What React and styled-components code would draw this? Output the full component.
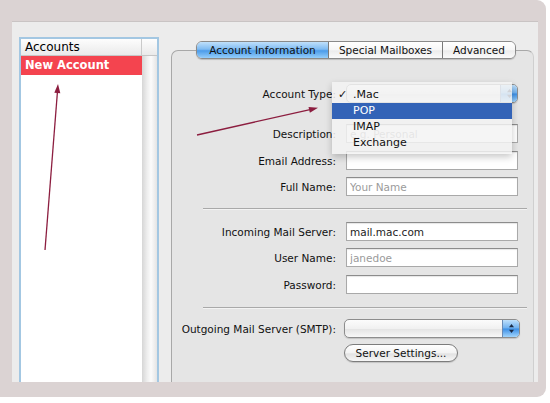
import styled, { createGlobalStyle } from "styled-components";

const GlobalStyle = createGlobalStyle`
  html, body { margin: 0; padding: 0; background: #ffffff; }
  body {
    font-family: "DejaVu Sans", "Liberation Sans", sans-serif;
    font-size: 10.5px;
    color: #141414;
  }
`;

const Frame = styled.div`
  position: relative;
  width: 546px;
  height: 397px;
  box-sizing: border-box;
  padding: 21px 8px 15px 12px;
  background: #dbd3d3;
  border-radius: 0 9px 9px 0;
  display: flex;
`;

const Window = styled.div`
  flex: 1;
  display: flex;
  gap: 12px;
  background: #ececec;
  border-top: 1px solid #c9c4c4;
  padding: 0 4px 0 7px;
`;

const Sidebar = styled.div`
  width: 140px;
  margin-top: 15px;
  box-sizing: border-box;
  border: 2px solid #a3c7e2;
  border-bottom: none;
  box-shadow: inset 0 0 0 1px #cfe0ee;
  display: flex;
  flex-direction: column;
  background: #fff;
`;

const ListHeader = styled.div`
  height: 16px;
  display: flex;
  background: linear-gradient(#fdfdfd, #eaeaea);
  border-bottom: 1px solid #c6c6c6;
`;

const HeaderCell = styled.div`
  flex: 1;
  padding-left: 4px;
  font-size: 12px;
  line-height: 16px;
  color: #000;
  border-right: 1px solid #cacaca;
`;

const HeaderCorner = styled.div`
  width: 15px;
`;

const ListBody = styled.div`
  flex: 1;
  display: flex;
`;

const ListColumn = styled.div`
  flex: 1;
  background: #fff;
`;

const ScrollTrack = styled.div`
  width: 15px;
  background: linear-gradient(90deg, #d6d6d6, #eeeeee 35%, #fbfbfb 60%, #e4e4e4);
`;

const ListRow = styled.div`
  height: 19px;
  line-height: 19px;
  padding-left: 4px;
  font-size: 11.5px;
  font-weight: bold;
  color: #fff;
  background: ${(p) => (p.$selected ? "#f4444f" : "transparent")};
`;

const RightColumn = styled.div`
  flex: 1;
  padding-top: 19px;
  display: flex;
  flex-direction: column;
`;

const TabBar = styled.div`
  align-self: flex-start;
  margin-left: 25px;
  margin-bottom: -9px;
  position: relative;
  z-index: 1;
  display: flex;
  height: 18px;
  box-sizing: border-box;
  border: 1px solid #8a8a8a;
  border-radius: 6px;
  overflow: hidden;
  box-shadow: 0 1px 1px rgba(0, 0, 0, 0.18);
`;

const Tab = styled.div`
  width: ${(p) => p.$w}px;
  box-sizing: border-box;
  text-align: center;
  line-height: 16px;
  font-size: 10.5px;
  color: #111;
  border-left: ${(p) => (p.$first ? "none" : "1px solid #7a7a7a")};
  background: ${(p) =>
    p.$active
      ? "linear-gradient(#bfe0fb, #7fbbf2 45%, #4c9cea 55%, #95cefb)"
      : "linear-gradient(#ffffff, #f6f6f6 50%, #ececec 55%, #fafafa)"};
`;

const Panel = styled.div`
  flex: 1;
  background: #e5e5e5;
  border: 1px solid #a8a8a8;
  border-right-color: #cfcfcf;
  border-bottom: none;
  border-radius: 7px 7px 0 0;
  padding-top: 33px;
  display: flex;
  flex-direction: column;
`;

const Row = styled.div`
  display: grid;
  grid-template-columns: 164px 172px;
  column-gap: 10px;
  align-items: center;
  margin-top: ${(p) => p.$top || 0}px;
`;

const Label = styled.label`
  text-align: right;
  white-space: nowrap;
  color: #111;
`;

const Field = styled.input`
  height: 19px;
  box-sizing: border-box;
  border: 1px solid #a9a9a9;
  border-top-color: #8c8c8c;
  background: #fff;
  box-shadow: inset 0 1px 1px rgba(0, 0, 0, 0.1);
  font: inherit;
  padding: 0 3px;
  color: #222;
  outline: none;
  &::placeholder { color: #9b9b9b; }
`;

const PopUpHolder = styled.div`
  position: relative;
  margin-left: ${(p) => p.$shift || 0}px;
  width: ${(p) => p.$w}px;
`;

const PopUp = styled.div`
  height: 19px;
  box-sizing: border-box;
  border: 1px solid #8d8d8d;
  border-radius: 5px;
  overflow: hidden;
  display: flex;
  justify-content: flex-end;
  background: linear-gradient(#fcfcfc, #f1f1f1 50%, #e3e3e3 52%, #f8f8f8);
  box-shadow: 0 1px 1px rgba(0, 0, 0, 0.15);
`;

const PopUpCap = styled.div`
  width: 16px;
  border-left: 1px solid #6a8bb5;
  background: linear-gradient(#bfe0fb, #6eb0ef 48%, #3b8ee5 52%, #a2d5fc);
  display: flex;
  align-items: center;
  justify-content: center;
`;

const Menu = styled.div`
  position: absolute;
  left: -14px;
  top: -2px;
  width: 180px;
  padding: 5px 0 3px;
  background: rgba(243, 243, 243, 0.84);
  box-shadow: 0 3px 7px rgba(0, 0, 0, 0.22);
  z-index: 3;
`;

const MenuItem = styled.div`
  height: 16px;
  line-height: 16px;
  display: flex;
  font-size: 11px;
  color: ${(p) => (p.$hot ? "#fff" : "#111")};
  background: ${(p) => (p.$hot ? "#3363b7" : "transparent")};
`;

const Check = styled.span`
  width: 15px;
  margin-left: 6px;
  font-weight: bold;
`;

const Divider = styled.div`
  margin: ${(p) => p.$top}px 6px 0 31px;
  height: 1px;
  background: #a9a9a9;
  border-bottom: 1px solid #f3f3f3;
`;

const PushButton = styled.button`
  justify-self: start;
  margin-left: -2px;
  width: 114px;
  height: 18px;
  box-sizing: border-box;
  border: 1px solid #7c7c7c;
  border-radius: 9px;
  background: linear-gradient(#ffffff, #f3f3f3 50%, #e2e2e2 55%, #f7f7f7);
  box-shadow: 0 1px 1px rgba(0, 0, 0, 0.15);
  font: inherit;
  color: #111;
  padding: 0;
`;

const Annotations = styled.svg`
  position: absolute;
  left: 0;
  top: 0;
  pointer-events: none;
  z-index: 5;
`;

const Stepper = () => (
  <svg width="7" height="11" viewBox="0 0 7 11">
    <path d="M3.5 1 L6 4.2 L1 4.2 Z" fill="#1b2a44" />
    <path d="M3.5 10 L6 6.8 L1 6.8 Z" fill="#1b2a44" />
  </svg>
);

const App = () => {
  return (
    <>
      <GlobalStyle />
      <Frame>
        <Window>
          <Sidebar>
            <ListHeader>
              <HeaderCell>Accounts</HeaderCell>
              <HeaderCorner />
            </ListHeader>
            <ListBody>
              <ListColumn>
                <ListRow $selected>New Account</ListRow>
              </ListColumn>
              <ScrollTrack />
            </ListBody>
          </Sidebar>

          <RightColumn>
            <TabBar>
              <Tab $w={131} $first $active>Account Information</Tab>
              <Tab $w={114}>Special Mailboxes</Tab>
              <Tab $w={73}>Advanced</Tab>
            </TabBar>
            <Panel>
              <Row>
                <Label>Account Type:</Label>
                <PopUpHolder $w={172}>
                  <PopUp>
                    <PopUpCap>
                      <Stepper />
                    </PopUpCap>
                  </PopUp>
                  <Menu>
                    <MenuItem><Check>✓</Check>.Mac</MenuItem>
                    <MenuItem $hot><Check />POP</MenuItem>
                    <MenuItem><Check />IMAP</MenuItem>
                    <MenuItem><Check />Exchange</MenuItem>
                  </Menu>
                </PopUpHolder>
              </Row>
              <Row $top={21}>
                <Label>Description:</Label>
                <Field placeholder="e.g. Personal" />
              </Row>
              <Row $top={8}>
                <Label>Email Address:</Label>
                <Field />
              </Row>
              <Row $top={7}>
                <Label>Full Name:</Label>
                <Field placeholder="Your Name" />
              </Row>
              <Divider $top={12} />
              <Row $top={12}>
                <Label>Incoming Mail Server:</Label>
                <Field defaultValue="mail.mac.com" />
              </Row>
              <Row $top={7}>
                <Label>User Name:</Label>
                <Field placeholder="janedoe" />
              </Row>
              <Row $top={8}>
                <Label>Password:</Label>
                <Field type="password" />
              </Row>
              <Divider $top={13} />
              <Row $top={10}>
                <Label>Outgoing Mail Server (SMTP):</Label>
                <PopUpHolder $w={176} $shift={-2}>
                  <PopUp>
                    <PopUpCap>
                      <Stepper />
                    </PopUpCap>
                  </PopUp>
                </PopUpHolder>
              </Row>
              <Row $top={6}>
                <span />
                <PushButton>Server Settings...</PushButton>
              </Row>
            </Panel>
          </RightColumn>
        </Window>

        <Annotations width="550" height="403" viewBox="0 0 550 403">
          <g stroke="#8c1d3f" strokeWidth="1.3" fill="none">
            <line x1="45" y1="250" x2="57.5" y2="91" />
            <line x1="197" y1="135" x2="310" y2="109.6" />
          </g>
          <g fill="#8c1d3f">
            <polygon points="58,84 60.3,93.2 54.3,92.8" />
            <polygon points="318,107.8 309.9,112.7 308.5,106.9" />
          </g>
        </Annotations>
      </Frame>
    </>
  );
};

export default App;
